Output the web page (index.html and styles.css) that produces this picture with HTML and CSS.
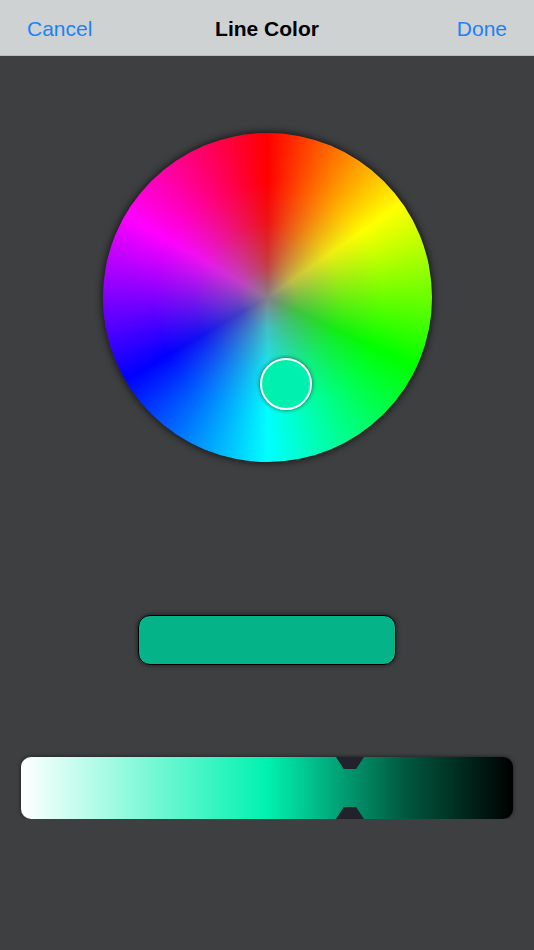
FILE: index.html
```html
<!DOCTYPE html>
<html>
<head>
<meta charset="utf-8">
<link rel="stylesheet" href="styles.css">
</head>
<body>
<header class="bar">
  <span class="btn btn-left">Cancel</span>
  <span class="title">Line Color</span>
  <span class="btn btn-right">Done</span>
</header>
<main class="content">
  <div class="wheel">
    <div class="wheel-sat"></div>
    <div class="knob"></div>
  </div>
  <div class="swatch"></div>
  <div class="slider">
    <div class="notch notch-top"></div>
    <div class="notch notch-bottom"></div>
  </div>
</main>
</body>
</html>
```
FILE: styles.css
```css
html, body {
  margin: 0;
  padding: 0;
  background: #3e3f41;
  font-family: "Liberation Sans", Arial, sans-serif;
}
.bar {
  height: 56px;
  background: #cfd2d3;
  border-bottom: 1px solid #b8bbbc;
  display: grid;
  grid-template-columns: 1fr auto 1fr;
  align-items: center;
  padding: 2px 27px 0 27px;
  box-sizing: border-box;
}
.btn {
  color: #1a82fb;
  font-size: 21px;
}
.btn-right {
  justify-self: end;
}
.title {
  color: #000;
  font-size: 21px;
  font-weight: bold;
}
.content {
  display: flex;
  flex-direction: column;
  align-items: center;
}
.wheel {
  position: relative;
  margin-top: 77px;
  margin-left: 1px;
  width: 329px;
  height: 329px;
  border-radius: 50%;
  background: conic-gradient(#ff0000, #ffff00 55deg, #00ff00 115deg, #00ffff 180deg, #0000ff 240deg, #ff00ff 300deg, #ff0000);
  box-shadow: 0 0 8px rgba(0, 0, 0, 0.85);
}
.wheel-sat {
  width: 100%;
  height: 100%;
  border-radius: 50%;
  background: radial-gradient(closest-side, rgba(132, 128, 138, 1) 0%, rgba(132, 128, 138, 0.5) 18%, rgba(132, 128, 138, 0.15) 45%, rgba(132, 128, 138, 0) 70%);
}
.knob {
  position: absolute;
  left: 157px;
  top: 225px;
  width: 48px;
  height: 48px;
  border-radius: 50%;
  background: #00f0b0;
  border: 2px solid #ffffff;
  box-shadow: 0 0 4px rgba(0, 0, 0, 0.6);
}
.swatch {
  margin-top: 153px;
  width: 256px;
  height: 48px;
  border: 1px solid #000;
  border-radius: 12px;
  background: #04b387;
  box-shadow: 0 0 5px rgba(0, 0, 0, 0.6);
}
.slider {
  position: relative;
  margin-top: 92px;
  width: 492px;
  height: 62px;
  border-radius: 10px;
  background: linear-gradient(to right, #ffffff 0%, #00f2b0 50%, #00593f 78%, #000000 100%);
  box-shadow: 0 0 4px rgba(0, 0, 0, 0.6);
}
.notch {
  position: absolute;
  left: 315px;
  width: 28px;
  height: 12px;
  background: #22222c;
}
.notch-top {
  top: 0;
  clip-path: polygon(0 0, 100% 0, 72% 100%, 28% 100%);
}
.notch-bottom {
  bottom: 0;
  clip-path: polygon(28% 0, 72% 0, 100% 100%, 0 100%);
}
```
